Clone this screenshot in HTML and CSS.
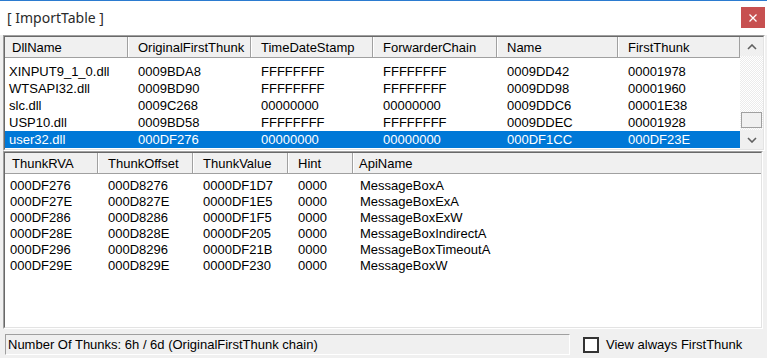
FILE: index.html
```html
<!DOCTYPE html>
<html>
<head>
<meta charset="utf-8">
<title>ImportTable</title>
<link rel="stylesheet" href="styles.css">
</head>
<body>
<div class="window">
  <div class="titlebar">
    <span class="title">[ ImportTable ]</span>
    <div class="close">
      <svg width="10" height="10" viewBox="0 0 10 10"><path d="M1.5 1.5 L8.5 8.5 M8.5 1.5 L1.5 8.5" stroke="#fff" stroke-width="1.3" fill="none"/></svg>
    </div>
  </div>
  <div class="content">
    <div class="listbox listbox-top">
      <div class="inner">
        <div class="lv">
          <div class="hdr cols-top">
            <div class="hc first">DllName</div>
            <div class="hc">OriginalFirstThunk</div>
            <div class="hc">TimeDateStamp</div>
            <div class="hc">ForwarderChain</div>
            <div class="hc">Name</div>
            <div class="hc">FirstThunk</div>
          </div>
          <div class="rows rows-top">
            <div class="row cols-top"><div class="c first">XINPUT9_1_0.dll</div><div class="c">0009BDA8</div><div class="c">FFFFFFFF</div><div class="c">FFFFFFFF</div><div class="c">0009DD42</div><div class="c">00001978</div></div>
            <div class="row cols-top"><div class="c first">WTSAPI32.dll</div><div class="c">0009BD90</div><div class="c">FFFFFFFF</div><div class="c">FFFFFFFF</div><div class="c">0009DD98</div><div class="c">00001960</div></div>
            <div class="row cols-top"><div class="c first">slc.dll</div><div class="c">0009C268</div><div class="c">00000000</div><div class="c">00000000</div><div class="c">0009DDC6</div><div class="c">00001E38</div></div>
            <div class="row cols-top"><div class="c first">USP10.dll</div><div class="c">0009BD58</div><div class="c">FFFFFFFF</div><div class="c">FFFFFFFF</div><div class="c">0009DDEC</div><div class="c">00001928</div></div>
            <div class="row cols-top selected"><div class="c first">user32.dll</div><div class="c">000DF276</div><div class="c">00000000</div><div class="c">00000000</div><div class="c">000DF1CC</div><div class="c">000DF23E</div></div>
          </div>
        </div>
        <div class="vscroll">
          <div class="sbtn">
            <svg width="10" height="6" viewBox="0 0 10 6"><polyline points="1,5 5,1 9,5" fill="none" stroke="#606060" stroke-width="1.6"/></svg>
          </div>
          <div class="track"><div class="thumb"></div></div>
          <div class="sbtn">
            <svg width="10" height="6" viewBox="0 0 10 6"><polyline points="1,1 5,5 9,1" fill="none" stroke="#606060" stroke-width="1.6"/></svg>
          </div>
        </div>
      </div>
    </div>

    <div class="listbox listbox-bottom">
      <div class="inner">
        <div class="lv">
          <div class="hdr cols-bottom">
            <div class="hc first">ThunkRVA</div>
            <div class="hc">ThunkOffset</div>
            <div class="hc">ThunkValue</div>
            <div class="hc">Hint</div>
            <div class="hc api">ApiName</div>
          </div>
          <div class="rows rows-bottom">
            <div class="row cols-bottom"><div class="c first">000DF276</div><div class="c">000D8276</div><div class="c">0000DF1D7</div><div class="c">0000</div><div class="c api">MessageBoxA</div></div>
            <div class="row cols-bottom"><div class="c first">000DF27E</div><div class="c">000D827E</div><div class="c">0000DF1E5</div><div class="c">0000</div><div class="c api">MessageBoxExA</div></div>
            <div class="row cols-bottom"><div class="c first">000DF286</div><div class="c">000D8286</div><div class="c">0000DF1F5</div><div class="c">0000</div><div class="c api">MessageBoxExW</div></div>
            <div class="row cols-bottom"><div class="c first">000DF28E</div><div class="c">000D828E</div><div class="c">0000DF205</div><div class="c">0000</div><div class="c api">MessageBoxIndirectA</div></div>
            <div class="row cols-bottom"><div class="c first">000DF296</div><div class="c">000D8296</div><div class="c">0000DF21B</div><div class="c">0000</div><div class="c api">MessageBoxTimeoutA</div></div>
            <div class="row cols-bottom"><div class="c first">000DF29E</div><div class="c">000D829E</div><div class="c">0000DF230</div><div class="c">0000</div><div class="c api">MessageBoxW</div></div>
          </div>
        </div>
      </div>
    </div>

    <div class="statusrow">
      <div class="status">Number Of Thunks: 6h / 6d (OriginalFirstThunk chain)</div>
      <div class="check"><span class="box"></span><span class="label">View always FirstThunk</span></div>
    </div>
  </div>
</div>
</body>
</html>
```

FILE: styles.css
```css
* { box-sizing: border-box; }
html, body { margin: 0; padding: 0; }
body {
  width: 767px;
  height: 358px;
  overflow: hidden;
  background: #f0f0f0;
  font-family: "Liberation Sans", Arial, sans-serif;
  font-size: 13px;
  color: #000;
}
.window {
  width: 767px;
  height: 358px;
  display: flex;
  flex-direction: column;
  background: #f0f0f0;
}
.titlebar {
  height: 35px;
  flex: none;
  background: #fff;
  border-top: 1px solid #2b7bd0;
  display: flex;
  align-items: flex-start;
  justify-content: space-between;
}
.title {
  font-family: "Noto Sans", "Open Sans", sans-serif;
  font-size: 14px;
  color: #2a2a2a;
  margin: 7px 0 0 7px;
  line-height: 20px;
}
.close {
  width: 24px;
  height: 21px;
  margin: 6px 2px 0 0;
  background: #c75050;
  display: flex;
  align-items: center;
  justify-content: center;
}
.content {
  flex: 1;
  display: flex;
  flex-direction: column;
  padding: 0 0 0 3px;
}
.listbox {
  border-top: 1px solid #a0a0a0;
  border-left: 1px solid #a0a0a0;
  border-right: 1px solid #fff;
  border-bottom: 1px solid #fff;
  background: #fff;
}
.listbox .inner {
  border-top: 1px solid #696969;
  border-left: 1px solid #696969;
  border-right: 1px solid #e3e3e3;
  border-bottom: 1px solid #e3e3e3;
  display: flex;
  height: 100%;
}
.listbox-top { width: 762px; height: 116px; }
.listbox-bottom { width: 760px; height: 178px; }
.lv { flex: 1; display: flex; flex-direction: column; min-width: 0; }
.cols-top {
  display: grid;
  grid-template-columns: 123px 123px 122px 124px 121px 122px;
}
.cols-bottom {
  display: grid;
  grid-template-columns: 93px 95px 95px 65px 1fr;
}
.hdr {
  height: 21px;
  flex: none;
  background: #f0f0f0;
  border-bottom: 1px solid #a0a0a0;
}
.hc {
  border-left: 1px solid #fff;
  border-right: 1px solid #a0a0a0;
  padding-left: 9px;
  line-height: 21px;
  white-space: nowrap;
  overflow: hidden;
}
.hc.first { padding-left: 7px; border-left: none; }
.hc.api { padding-left: 5px; border-right: none; }
.rows-top { padding-top: 5px; }
.rows-bottom { padding-top: 4px; }
.row { height: 17px; line-height: 17px; }
.rows-bottom .row { height: 16px; line-height: 16px; }
.row .c { padding-left: 10px; white-space: nowrap; }
.row .c.first { padding-left: 4px; }
.rows-bottom .row .c.first { padding-left: 5px; }
.rows-bottom .row .c.api { padding-left: 7px; }
.row.selected { background: #0078d7; color: #fff; }

.vscroll {
  width: 23px;
  flex: none;
  display: flex;
  flex-direction: column;
  background: repeating-conic-gradient(#fff 0 25%, #ebebeb 0 50%) 0 0 / 2px 2px;
}
.sbtn {
  height: 19px;
  flex: none;
  background: #f0f0f0;
  display: flex;
  align-items: center;
  justify-content: center;
}
.track {
  flex: 1;
  display: flex;
  flex-direction: column;
  justify-content: flex-end;
  padding: 0 0 2px 1px;
}
.thumb {
  height: 16px;
  width: 21px;
  background: #f0f0f0;
  border: 1px solid #a0a0a0;
}

.statusrow {
  flex: 1;
  display: flex;
  align-items: center;
  padding: 2px 0 0 2px;
}
.status {
  width: 565px;
  height: 21px;
  line-height: 19px;
  padding-left: 2px;
  border-top: 1px solid #a0a0a0;
  border-left: 1px solid #a0a0a0;
  border-right: 1px solid #fff;
  border-bottom: 1px solid #fff;
  white-space: nowrap;
}
.check {
  display: flex;
  align-items: center;
  margin-left: 13px;
}
.box {
  width: 16px;
  height: 16px;
  border: 2px solid #333;
  background: #fff;
  margin-right: 7px;
}
.label { line-height: 17px; }
```
